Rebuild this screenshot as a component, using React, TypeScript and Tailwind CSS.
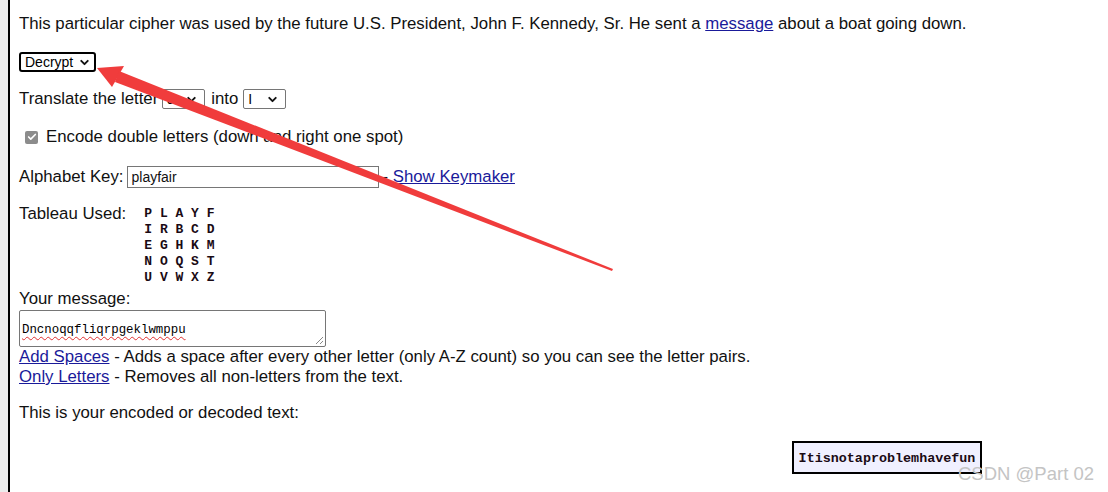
import { ChevronDown, Check } from "lucide-react";

const tableau = ["P L A Y F", "I R B C D", "E G H K M", "N O Q S T", "U V W X Z"];

const FakeSelect = ({ value, className }: { value: string; className: string }) => (
  <div className={`flex items-center justify-between bg-white ${className}`}>
    <span className="text-[14px] leading-none text-black">{value}</span>
    <ChevronDown size={13} strokeWidth={3.5} color="#111" />
  </div>
);

const App = () => {
  return (
    <div
      className="relative flex h-[492px] w-[1108px] overflow-hidden bg-white text-[16.8px] text-[#111]"
      style={{ fontFamily: '"Liberation Sans", Arial, sans-serif' }}
    >
      <div className="w-[8px] shrink-0 bg-[#ececec]" />
      <div className="w-[2px] shrink-0 bg-black" />
      <div className="flex flex-1 flex-col pl-[9px] pt-[15px]">
        <p className="leading-[18px]">
          This particular cipher was used by the future U.S. President, John F. Kennedy, Sr. He sent a{" "}
          <a className="text-[#1a1a9a] underline">message</a> about a boat going down.
        </p>

        <FakeSelect
          value="Decrypt"
          className="mt-[19px] h-[20px] w-[77px] rounded-[3px] border-2 border-black pl-[4px] pr-[3px]"
        />

        <div className="mt-[17px] flex h-[20px] items-center">
          <span>Translate the letter</span>
          <FakeSelect
            value="J"
            className="ml-[4px] h-[20px] w-[43px] rounded-[2px] border border-[#767676] pl-[4px] pr-[6px]"
          />
          <span className="ml-[6px]">into</span>
          <FakeSelect
            value="I"
            className="ml-[5px] h-[20px] w-[43px] rounded-[2px] border border-[#767676] pl-[4px] pr-[6px]"
          />
        </div>

        <div className="mt-[18px] flex h-[20px] items-center">
          <span className="ml-[6px] flex h-[13px] w-[13px] items-center justify-center rounded-[2px] bg-[#8c8c8c]">
            <Check size={10} strokeWidth={4} color="white" />
          </span>
          <span className="ml-[8px]">Encode double letters (down and right one spot)</span>
        </div>

        <div className="mt-[19px] flex h-[22px] items-center">
          <span>Alphabet Key:</span>
          <div className="ml-[3px] flex h-[22px] w-[252px] items-center border border-[#767676] pl-[4px] text-[14px]">
            playfair
          </div>
          <span className="ml-[4px]">
            - <a className="text-[#1a1a9a] underline">Show Keymaker</a>
          </span>
        </div>

        <div className="mt-[18px] flex">
          <span className="leading-[16px]">Tableau Used:</span>
          <div
            className="ml-[18px] whitespace-pre text-[13px] font-bold leading-[16px] text-[#1a0a14]"
            style={{ fontFamily: '"Liberation Mono", "Courier New", monospace' }}
          >
            {tableau.map((row) => (
              <div key={row}>{row}</div>
            ))}
          </div>
        </div>

        <p className="mt-[4px] leading-[18px]">Your message:</p>

        <div className="relative mt-[2px] h-[37px] w-[307px] rounded-[2px] border border-[#767676] px-[2px] pt-[4px]">
          <span
            className="text-[12.4px] leading-[14px] text-black underline decoration-[#e03030] decoration-wavy decoration-1 underline-offset-[3px]"
            style={{ fontFamily: '"Liberation Mono", "Courier New", monospace' }}
          >
            Dncnoqqfliqrpgeklwmppu
          </span>
          <svg className="absolute bottom-[1px] right-[1px]" width="9" height="9" viewBox="0 0 9 9">
            <path d="M8 1 L1 8 M8 5 L5 8" stroke="#888" strokeWidth="1" />
          </svg>
        </div>

        <p className="leading-[20px]">
          <a className="text-[#1a1a9a] underline">Add Spaces</a> - Adds a space after every other letter (only A-Z
          count) so you can see the letter pairs.
        </p>
        <p className="leading-[20px]">
          <a className="text-[#1a1a9a] underline">Only Letters</a> - Removes all non-letters from the text.
        </p>

        <p className="mt-[17px] leading-[18px]">This is your encoded or decoded text:</p>

        <div
          className="ml-[773px] mt-[19px] flex h-[33px] w-[190px] items-center justify-center border-2 border-black bg-[#f0f0ff] pt-[3px] text-[13.4px] font-bold text-[#1a0a14]"
          style={{ fontFamily: '"Liberation Mono", "Courier New", monospace' }}
        >
          Itisnotaproblemhavefun
        </div>
      </div>

      {/* annotation arrow */}
      <svg className="pointer-events-none absolute left-0 top-0" width="1108" height="492">
        <polygon points="97,68 124,66 112,87" fill="#f03c3c" />
        <polygon points="119,71 115,82 612,271 613,269" fill="#f03c3c" />
      </svg>

      <span className="absolute left-[958px] top-[463px] text-[18.5px] leading-[22px] text-[#c4c4c4]">
        CSDN @Part 02
      </span>
    </div>
  );
};

export default App;
